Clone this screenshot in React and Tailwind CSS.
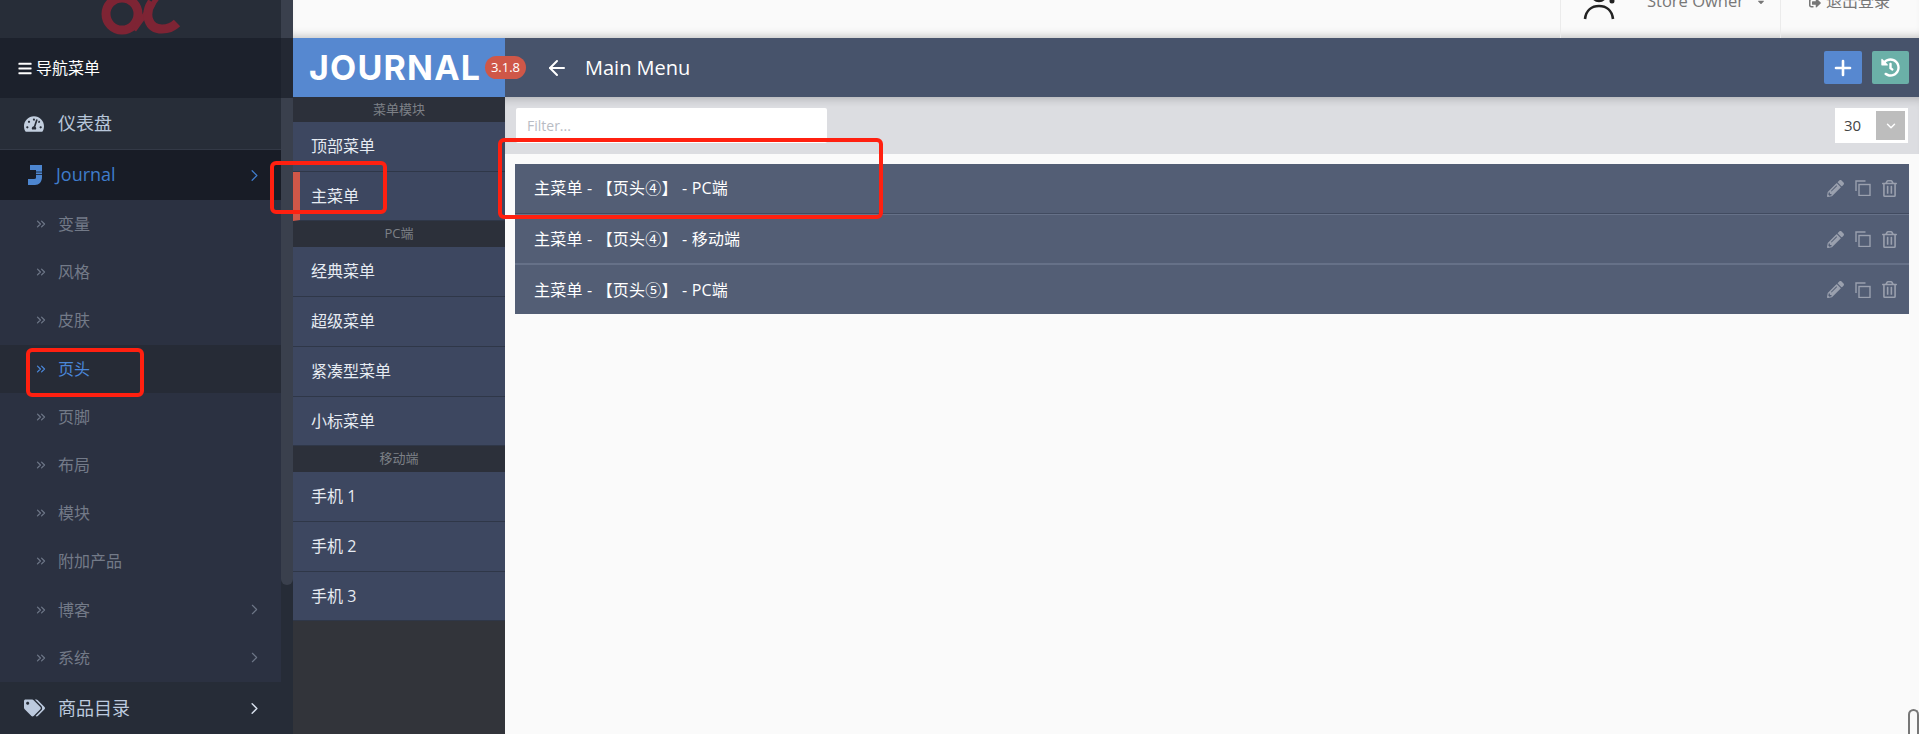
import React from "react";
import { FaBars, FaHistory, FaPencilAlt, FaRegTrashAlt, FaTachometerAlt, FaTags, FaCaretDown, FaSignOutAlt } from "react-icons/fa";
import { ArrowLeft, ChevronDown, ChevronRight, ChevronsRight, Plus } from "lucide-react";

const FONT = "font-['Open_Sans','Noto_Sans_CJK_SC',sans-serif]";

const subItems = [
  { label: "变量" },
  { label: "风格" },
  { label: "皮肤" },
  { label: "页头", active: true },
  { label: "页脚" },
  { label: "布局" },
  { label: "模块" },
  { label: "附加产品" },
  { label: "博客", arrow: true },
  { label: "系统", arrow: true },
];

const panel = [
  { title: "菜单模块", h: "h-[25px]", items: [["顶部菜单", "h-[50px] pb-[2px]"], ["主菜单", "h-[49px]", true]] },
  { title: "PC端", h: "h-[26px]", items: [["经典菜单", "h-[50px] pb-[2px]"], ["超级菜单", "h-[50px] pb-[2px]"], ["紧凑型菜单", "h-[50px] pb-[2px]"], ["小标菜单", "h-[49px]"]] },
  { title: "移动端", h: "h-[26px]", items: [["手机 1", "h-[50px] pb-[2px]"], ["手机 2", "h-[50px] pb-[2px]"], ["手机 3", "h-[49px]"]] },
];

const rows = ["主菜单 - 【页头④】 - PC端", "主菜单 - 【页头④】 - 移动端", "主菜单 - 【页头⑤】 - PC端"];

const OcLogo = () => (
  <svg width="100" height="38" viewBox="0 0 100 38" fill="none" stroke="#7e2434" strokeWidth="9">
    <circle cx="32" cy="14" r="16" />
    <path d="M44 30 L70 -6" strokeWidth="5" />
    <path d="M62 2 C54 14 58 29 72 29 C78 29 83 27 87 23" />
  </svg>
);

const JIcon = () => (
  <svg width="16" height="20" viewBox="0 0 16 20" fill="#4d86d0">
    <path d="M3 0h12v12c0 5-3 8-7 8H1v-6h6c2 0 2-1 2-2V5H3z" />
    <path d="M8 7h8M8 9.5h8" stroke="#181c26" strokeWidth="0.8" />
  </svg>
);

const CopyIcon = () => (
  <svg width="16" height="16" viewBox="0 0 16 16" fill="none" stroke="#9aa0ae" strokeWidth="1.4">
    <path d="M10.5 1H1v10" />
    <rect x="4" y="4.5" width="11" height="11" />
  </svg>
);

const UserIcon = () => (
  <svg width="36" height="20" viewBox="0 0 36 20" fill="#222" stroke="#222" strokeWidth="2.6">
    <path d="M2 19C3 10 9 6 16 6s13 4 14 13" fill="none" />
    <circle cx="16" cy="-6" r="7" fill="none" />
    <circle cx="29" cy="1" r="1.5" strokeWidth="2" />
  </svg>
);

const Sidebar = () => (
  <aside className="flex w-[293px] shrink-0">
    <div className="w-[281px] flex flex-col">
      <div className="h-[38px] bg-[#272d38] overflow-hidden pl-[90px]">
        <OcLogo />
      </div>
      <div className="h-[60px] bg-[#1c212c] flex items-center pl-[17px] gap-[3px] text-white text-[16px]">
        <FaBars className="w-[16px] h-[15px]" />
        <span>导航菜单</span>
      </div>
      <div className="h-[52px] bg-[#272d38] border-b border-[#333946] flex items-center text-[18px] text-[#b7c6da]">
        <FaTachometerAlt className="ml-[24px] w-[20px] h-[18px] text-[#c3cfdf]" />
        <span className="ml-[14px]">仪表盘</span>
      </div>
      <div className="h-[50px] bg-[#181c26] flex items-center text-[#3f7ccc] text-[18px]">
        <div className="ml-[27px] w-[16px]"><JIcon /></div>
        <span className="ml-[13px] pb-[2px]">Journal</span>
        <ChevronRight className="ml-auto mr-[17px] w-[19px] h-[19px]" strokeWidth={1.6} />
      </div>
      <div className="bg-[#2b3141] flex-1 flex flex-col">
        {subItems.map((s) => (
          <div key={s.label} className={`h-[48.2px] flex items-center text-[16px] ${s.active ? "bg-[#262b36] text-[#4a86d8]" : "text-[#737a88]"}`}>
            <ChevronsRight className={`ml-[34px] w-[14px] h-[14px] ${s.active ? "text-[#4a86d8]" : "text-[#6d7687]"}`} strokeWidth={2.2} />
            <span className="ml-[10px]">{s.label}</span>
            {s.arrow && <ChevronRight className="ml-auto mr-[18px] w-[17px] h-[17px] text-[#6d7687]" strokeWidth={1.6} />}
          </div>
        ))}
      </div>
      <div className="h-[52px] bg-[#262c37] flex items-center text-[18px] text-[#bccade]">
        <FaTags className="ml-[24px] w-[21px] h-[18px] text-[#bccade]" />
        <span className="ml-[13px]">商品目录</span>
        <ChevronRight className="ml-auto mr-[17px] w-[19px] h-[19px] text-[#d5deea]" strokeWidth={1.8} />
      </div>
    </div>
    <div className="w-[12px] flex flex-col bg-[#262c37]">
      <div className="h-[38px] bg-[#3a404d]" />
      <div className="h-[60px] bg-[#232833]" />
      <div className="h-[487px] bg-[#3a404d] rounded-b-md" />
    </div>
  </aside>
);

const Panel = () => (
  <div className="w-[212px] shrink-0 flex flex-col bg-[#32343a]">
    <div className="h-[59px] bg-[#5688d0] flex items-center pl-[16px] text-white text-[34px] font-bold tracking-[1.2px] font-['Inter',sans-serif]">
      JOURNAL
    </div>
    {panel.map((g) => (
      <div key={g.title} className="flex flex-col">
        <div className={`${g.h} bg-[#2c303a] flex items-center justify-center text-[13px] text-[#7d8087]`}>{g.title}</div>
        {g.items.map(([label, h, active]) => (
          <div key={label} className={`${h} bg-[#3d4760] border-b border-[#2f3748] flex items-center text-[16px] text-[#e6ebf2] ${active ? "border-l-[7px] border-l-[#cf5748] pl-[11px]" : "pl-[18px]"}`}>
            {label}
          </div>
        ))}
      </div>
    ))}
  </div>
);

const Main = () => (
  <main className="flex-1 bg-[#fafafa] flex flex-col">
    <div className="h-[59px] bg-[#47536b] flex items-center text-white">
      <ArrowLeft className="ml-[40px] w-[24px] h-[24px]" strokeWidth={2} />
      <span className="ml-[16px] text-[20px]">Main Menu</span>
      <button className="ml-auto w-[38px] h-[33px] bg-[#5788d0] rounded-[2px] flex items-center justify-center">
        <Plus className="w-[24px] h-[24px]" strokeWidth={2.6} />
      </button>
      <button className="ml-[10px] mr-[10px] w-[37px] h-[33px] bg-[#6bb0a8] rounded-[2px] flex items-center justify-center">
        <FaHistory className="w-[19px] h-[19px]" />
      </button>
    </div>
    <div className="h-[57px] bg-[#dcdde1] shadow-[inset_0_8px_8px_-6px_rgba(0,0,0,0.2)] flex items-center px-[11px]">
      <input placeholder="Filter..." className="w-[311px] h-[35px] bg-white rounded-[2px] pl-[11px] text-[14px] placeholder:text-[#b8bcc4] outline-none" />
      <div className="ml-auto h-[35px] w-[73px] bg-white flex items-center pl-[9px] pr-[3px] text-[15px] text-[#444]">
        <span>30</span>
        <div className="ml-auto w-[29px] h-[29px] bg-[#bdbdbd] flex items-center justify-center">
          <ChevronDown className="w-[14px] h-[14px] text-white" strokeWidth={2.5} />
        </div>
      </div>
    </div>
    <div className="mt-[10px] ml-[10px] mr-[10px] flex flex-col">
      {rows.map((r, i) => (
        <div key={i} className={`h-[50px] bg-[#535e75] flex items-center pl-[19px] pr-[12px] text-[16px] tracking-[0.2px] text-white ${i < 2 ? "border-b border-[#414b60]" : ""} ${i > 0 ? "border-t border-[#667188]" : "pb-[1px]"}`}>
          <span>{r}</span>
          <div className="ml-auto flex items-center gap-[11px] text-[#9aa0ae]">
            <FaPencilAlt className="w-[17px] h-[17px]" />
            <CopyIcon />
            <FaRegTrashAlt className="w-[15px] h-[17px]" />
          </div>
        </div>
      ))}
    </div>
  </main>
);

const App = () => {
  return (
    <div className={`relative flex h-[734px] overflow-hidden bg-[#fafafa] ${FONT}`}>
      <Sidebar />
      <div className="flex-1 flex flex-col min-w-0">
        <header className="h-[38px] shrink-0 bg-[#fafafa] shadow-[inset_0_-8px_8px_-6px_rgba(0,0,0,0.22)] flex justify-end overflow-hidden">
          <div className="w-[221px] border-l border-r border-[#ebebeb] flex items-start pl-[22px]">
            <UserIcon />
            <span className="ml-[28px] -mt-[10px] text-[16.5px] text-[#777] leading-[22px]">Store Owner</span>
            <FaCaretDown className="ml-[12px] -mt-[3px] w-[10px] h-[10px] text-[#777]" />
          </div>
          <div className="w-[138px] flex items-start pl-[27px] text-[#777]">
            <FaSignOutAlt className="-mt-[3px] w-[14px] h-[12px]" />
            <span className="ml-[4px] -mt-[10px] text-[16px] leading-[22px]">退出登录</span>
          </div>
        </header>
        <div className="flex-1 flex min-h-0">
          <Panel />
          <Main />
        </div>
      </div>

      {/* version badge sits across the panel edge */}
      <span className="absolute left-[485px] top-[56px] h-[23px] w-[41px] rounded-full bg-[#cf5748] text-white text-[13px] flex items-center justify-center">3.1.8</span>

      {/* red annotation boxes */}
      <div className="absolute left-[270px] top-[161px] w-[117px] h-[53px] border-[4px] border-[#ff2010] rounded-[6px]" />
      <div className="absolute left-[26px] top-[348px] w-[118px] h-[49px] border-[4px] border-[#ff2010] rounded-[6px]" />
      <div className="absolute left-[498px] top-[138px] w-[385px] h-[81px] border-[4px] border-[#ff2010] rounded-[6px]" />

      {/* cursor-like shape in the corner */}
      <div className="absolute left-[1908px] top-[709px] w-[11px] h-[25px] border-[2px] border-b-0 border-[#777] rounded-t-full" />
    </div>
  );
};

export default App;
